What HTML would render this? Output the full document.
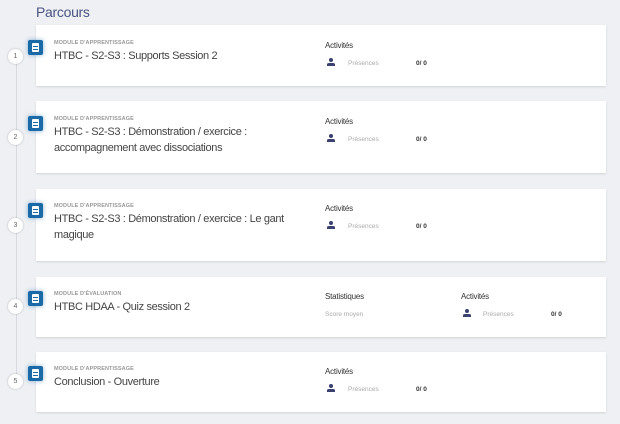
<!DOCTYPE html><html><head><style>
body{margin:0;width:620px;height:424px;background:#eef0f4;font-family:"Liberation Sans",sans-serif;position:relative;overflow:hidden}
.a{position:absolute}
.h{left:36px;top:4px;font-size:14px;color:#4a5480;letter-spacing:-0.3px}
.line{left:16px;top:56px;width:1px;height:325px;background:#d6d9df}
.card{left:36px;width:570px;background:#fff;box-shadow:0 1px 2px rgba(0,0,0,.12)}
.num{left:8px;width:15px;height:15px;border-radius:50%;background:#fff;box-shadow:0 0 2px rgba(0,0,0,.25);font-size:7px;color:#666;text-align:center;line-height:15px}
.ic{left:28px;width:15px;height:15px;background:#1a6aa8;border-radius:2px;box-shadow:0 0 5px rgba(26,106,168,.5)}
.ic:before{content:"";position:absolute;left:4px;top:3px;width:7px;height:9px;background:#fff;border-radius:1px}
.ic:after{content:"";position:absolute;left:5px;top:6px;width:5px;height:4px;border-top:1px solid #1a6aa8;border-bottom:1px solid #1a6aa8;box-sizing:border-box}
.lab{font-size:5.5px;color:#999;font-weight:bold;letter-spacing:.1px}
.t{font-size:11px;letter-spacing:-0.35px;color:#444;line-height:16px;width:240px}
.s{font-size:8px;color:#333;letter-spacing:-0.2px}
.p{font-size:6.5px;color:#aaa}
.z{font-size:6.5px;color:#333;font-weight:bold}
.u{width:8px;height:8px}
</style></head><body>
<div class="a h">Parcours</div>
<div class="a line"></div>

<div class="a card" style="top:25px;height:61px"></div>
<div class="a card" style="top:101px;height:72px"></div>
<div class="a card" style="top:189px;height:72px"></div>
<div class="a card" style="top:277px;height:60px"></div>
<div class="a card" style="top:352px;height:60px"></div>

<div class="a num" style="top:49px">1</div>
<div class="a num" style="top:130px">2</div>
<div class="a num" style="top:218px">3</div>
<div class="a num" style="top:299px">4</div>
<div class="a num" style="top:374px">5</div>

<div class="a ic" style="top:40px"></div>
<div class="a ic" style="top:116px"></div>
<div class="a ic" style="top:203px"></div>
<div class="a ic" style="top:291px"></div>
<div class="a ic" style="top:366px"></div>

<div class="a lab" style="left:54px;top:40px">MODULE D'APPRENTISSAGE</div>
<div class="a t" style="left:54px;top:48px">HTBC - S2-S3 : Supports Session 2</div>
<div class="a lab" style="left:54px;top:116px">MODULE D'APPRENTISSAGE</div>
<div class="a t" style="left:54px;top:124px">HTBC - S2-S3 : Démonstration / exercice :<br>accompagnement avec dissociations</div>
<div class="a lab" style="left:54px;top:203px">MODULE D'APPRENTISSAGE</div>
<div class="a t" style="left:54px;top:211px">HTBC - S2-S3 : Démonstration / exercice : Le gant<br>magique</div>
<div class="a lab" style="left:54px;top:291px">MODULE D'ÉVALUATION</div>
<div class="a t" style="left:54px;top:299px">HTBC HDAA - Quiz session 2</div>
<div class="a lab" style="left:54px;top:366px">MODULE D'APPRENTISSAGE</div>
<div class="a t" style="left:54px;top:374px">Conclusion - Ouverture</div>

<div class="a s" style="left:325px;top:41px">Activités</div>
<svg class="a u" style="left:327px;top:58px" viewBox="0 0 8 8"><circle cx="4" cy="2" r="2" fill="#3a4170"/><path d="M0 8V6.5Q0 5 2 5H6Q8 5 8 6.5V8Z" fill="#3a4170"/></svg>
<div class="a p" style="left:348px;top:60px">Présences</div><div class="a z" style="left:416px;top:60px">0/ 0</div>

<div class="a s" style="left:325px;top:117px">Activités</div>
<svg class="a u" style="left:327px;top:134px" viewBox="0 0 8 8"><circle cx="4" cy="2" r="2" fill="#3a4170"/><path d="M0 8V6.5Q0 5 2 5H6Q8 5 8 6.5V8Z" fill="#3a4170"/></svg>
<div class="a p" style="left:348px;top:136px">Présences</div><div class="a z" style="left:416px;top:136px">0/ 0</div>

<div class="a s" style="left:325px;top:204px">Activités</div>
<svg class="a u" style="left:327px;top:221px" viewBox="0 0 8 8"><circle cx="4" cy="2" r="2" fill="#3a4170"/><path d="M0 8V6.5Q0 5 2 5H6Q8 5 8 6.5V8Z" fill="#3a4170"/></svg>
<div class="a p" style="left:348px;top:223px">Présences</div><div class="a z" style="left:416px;top:223px">0/ 0</div>

<div class="a s" style="left:325px;top:292px">Statistiques</div>
<div class="a p" style="left:325px;top:311px">Score moyen</div>
<div class="a s" style="left:461px;top:292px">Activités</div>
<svg class="a u" style="left:463px;top:309px" viewBox="0 0 8 8"><circle cx="4" cy="2" r="2" fill="#3a4170"/><path d="M0 8V6.5Q0 5 2 5H6Q8 5 8 6.5V8Z" fill="#3a4170"/></svg>
<div class="a p" style="left:483px;top:311px">Présences</div><div class="a z" style="left:551px;top:311px">0/ 0</div>

<div class="a s" style="left:325px;top:367px">Activités</div>
<svg class="a u" style="left:327px;top:384px" viewBox="0 0 8 8"><circle cx="4" cy="2" r="2" fill="#3a4170"/><path d="M0 8V6.5Q0 5 2 5H6Q8 5 8 6.5V8Z" fill="#3a4170"/></svg>
<div class="a p" style="left:348px;top:386px">Présences</div><div class="a z" style="left:416px;top:386px">0/ 0</div>
</body></html>
